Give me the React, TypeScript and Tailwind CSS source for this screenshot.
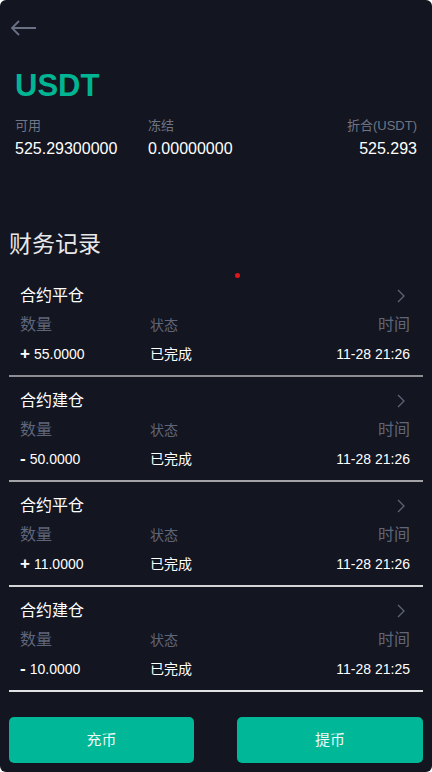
import React from 'react';

const records = [
  { title: '合约平仓', sign: '+', amount: '55.0000', time: '11-28 21:26', line: 'border-[#8e8e92]' },
  { title: '合约建仓', sign: '-', amount: '50.0000', time: '11-28 21:26', line: 'border-[#a4a4a8]' },
  { title: '合约平仓', sign: '+', amount: '11.0000', time: '11-28 21:26', line: 'border-[#d4d4d6]' },
  { title: '合约建仓', sign: '-', amount: '10.0000', time: '11-28 21:25', line: 'border-[#e2e2e4]' },
];

function Chevron() {
  return (
    <svg className="mr-[4px]" width="10" height="16" viewBox="0 0 10 16" fill="none">
      <path d="M2 2l6 6-6 6" stroke="#5d6478" strokeWidth="1.3" />
    </svg>
  );
}

export default function App() {
  return (
    <div className="w-[432px] h-[772px] bg-white font-['Liberation_Sans','Noto_Sans_CJK_SC',sans-serif]">
      <div className="h-full bg-[#131520] rounded-[6px] flex flex-col overflow-hidden">
        <div className="h-[58px] pl-[10px] pt-[20px]">
          <svg width="28" height="16" viewBox="0 0 28 16" fill="none">
            <path d="M26 8H2M9 1L2 8l7 7" stroke="#6b7184" strokeWidth="1.8" />
          </svg>
        </div>

        <div className="px-[15px]">
          <div className="text-[31px] leading-[36px] font-bold text-[#00b593] mt-[10px]">USDT</div>
          <div className="flex mt-[14px]">
            <div className="w-[133px]">
              <div className="text-[13px] leading-[16px] text-[#6f7586]">可用</div>
              <div className="text-[16px] leading-[20px] text-white mt-[5px]">525.29300000</div>
            </div>
            <div className="flex-1">
              <div className="text-[13px] leading-[16px] text-[#6f7586]">冻结</div>
              <div className="text-[16px] leading-[20px] text-white mt-[5px]">0.00000000</div>
            </div>
            <div className="text-right">
              <div className="text-[13px] leading-[16px] text-[#6f7586]">折合(USDT)</div>
              <div className="text-[16px] leading-[20px] text-white mt-[5px]">525.293</div>
            </div>
          </div>
        </div>

        <div className="px-[9px] mt-[71px]">
          <div className="text-[23px] leading-[28px] text-[#e8e8ea]">财务记录</div>
          <div className="relative mt-[14px]">
            <span className="absolute left-[226px] top-[1px] w-[5px] h-[5px] rounded-full bg-[#e0161b]" />
            {records.map((r, i) => (
              <div key={i} className={`pt-[14px] pb-[12px] pl-[11px] pr-[13px] border-b-2 ${r.line}`}>
                <div className="flex items-center justify-between h-[20px]">
                  <span className="text-[16px] text-white">{r.title}</span>
                  <Chevron />
                </div>
                <div className="flex items-center mt-[8px] h-[22px]">
                  <span className="w-[130px] text-[16px] text-[#60667a]">数量</span>
                  <span className="flex-1 text-[14px] text-[#60667a]">状态</span>
                  <span className="text-[16px] text-[#60667a]">时间</span>
                </div>
                <div className="flex items-center mt-[9px] h-[18px]">
                  <span className="w-[130px] text-[14px] text-white">
                    <span className="text-[17px] font-bold mr-[4px]">{r.sign}</span>
                    {r.amount}
                  </span>
                  <span className="flex-1 text-[14px] text-white">已完成</span>
                  <span className="text-[14px] text-white">{r.time}</span>
                </div>
              </div>
            ))}
          </div>

          <div className="flex justify-between mt-[25px]">
            <button className="w-[185px] h-[46px] rounded-[5px] bg-[#00b797] text-[15px] text-[#eef8f5]">充币</button>
            <button className="w-[186px] h-[46px] rounded-[5px] bg-[#00b797] text-[15px] text-[#eef8f5]">提币</button>
          </div>
        </div>
      </div>
    </div>
  );
}
